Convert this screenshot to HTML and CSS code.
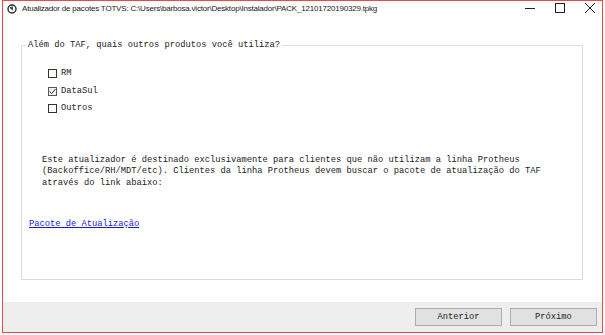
FILE: index.html
```html
<!DOCTYPE html>
<html lang="pt-BR">
<head>
<meta charset="utf-8">
<title>Atualizador de pacotes TOTVS</title>
<link rel="stylesheet" href="styles.css">
</head>
<body>
<div class="window">
  <div class="titlebar">
    <svg class="app-icon" width="10" height="10" viewBox="0 0 10 10">
      <circle cx="5" cy="5" r="4" fill="none" stroke="#2b2b2b" stroke-width="1.4"/>
      <path d="M3.2 3.2 L5.2 5.2 L5.2 2.4" fill="none" stroke="#2b2b2b" stroke-width="1.3"/>
    </svg>
    <span class="title">Atualizador de pacotes TOTVS: C:\Users\barbosa.victor\Desktop\Instalador\PACK_12101720190329.tpkg</span>
    <div class="controls">
      <span class="ctl"><svg width="10" height="10" viewBox="0 0 10 10"><path d="M0 5.5 H10" stroke="#222" stroke-width="1"/></svg></span>
      <span class="ctl"><svg width="10" height="10" viewBox="0 0 10 10"><rect x="0.5" y="0.5" width="9" height="9" fill="none" stroke="#222" stroke-width="1"/></svg></span>
      <span class="ctl"><svg width="10" height="10" viewBox="0 0 10 10"><path d="M0 0 L10 10 M10 0 L0 10" stroke="#222" stroke-width="1"/></svg></span>
    </div>
  </div>
  <div class="content">
    <fieldset class="group">
      <legend class="legend">Além do TAF, quais outros produtos você utiliza?</legend>
      <div class="options">
        <label class="opt"><span class="box"></span>RM</label>
        <label class="opt"><span class="box checked"><svg width="7" height="7" viewBox="0 0 7 7"><path d="M0.5 3.5 L2.6 5.6 L6.5 1" fill="none" stroke="#333" stroke-width="1"/></svg></span>DataSul</label>
        <label class="opt"><span class="box"></span>Outros</label>
      </div>
      <p class="note">Este atualizador é destinado exclusivamente para clientes que não utilizam a linha Protheus<br>(Backoffice/RH/MDT/etc). Clientes da linha Protheus devem buscar o pacote de atualização do TAF<br>através do link abaixo:</p>
      <a class="link" href="#">Pacote de Atualização</a>
    </fieldset>
  </div>
  <div class="footer">
    <button class="btn">Anterior</button>
    <button class="btn">Próximo</button>
  </div>
</div>
</body>
</html>
```

FILE: styles.css
```css
html, body {
  margin: 0;
  padding: 0;
  background: #ffffff;
}

.window {
  margin-left: 2px;
  width: 599px;
  height: 331px;
  border: 1px solid #e84a4a;
  display: flex;
  flex-direction: column;
  background: #ffffff;
}

.titlebar {
  height: 30px;
  display: flex;
  align-items: flex-start;
  flex-shrink: 0;
}

.app-icon {
  margin: 3px 0 0 4px;
  flex-shrink: 0;
}

.title {
  font-family: "Liberation Sans", Arial, sans-serif;
  font-size: 8px;
  letter-spacing: -0.2px;
  color: #1a1a1a;
  margin: 2px 0 0 5px;
  line-height: 12px;
  white-space: nowrap;
  flex: 1;
}

.controls {
  display: flex;
  margin: 2px 7px 0 0;
  gap: 20px;
}

.ctl {
  display: flex;
  width: 10px;
  height: 10px;
}

.content {
  flex: 1;
  display: flex;
  flex-direction: column;
  padding: 8px 19px 22px 18px;
}

.group {
  flex: 1;
  margin: 0;
  padding: 0;
  border: 1px solid #dcdcdc;
  min-width: 0;
  font-family: "Liberation Mono", "DejaVu Sans Mono", monospace;
  font-size: 8.75px;
  color: #222;
}

.legend {
  margin-left: 4px;
  padding: 0 2px;
  line-height: 12px;
  font-size: 8.75px;
}

.options {
  display: flex;
  flex-direction: column;
  margin: 14px 0 0 26px;
}

.opt {
  display: flex;
  align-items: center;
  height: 17.5px;
  line-height: 17px;
}

.box {
  width: 9px;
  height: 9px;
  box-sizing: border-box;
  border: 1px solid #333;
  background: #fff;
  margin-right: 4px;
  display: flex;
  align-items: center;
  justify-content: center;
}

.box.checked {
  border-color: #555;
  background: #f0f0f0;
}

.note {
  margin: 37px 0 0 20px;
  line-height: 11.5px;
}

.link {
  display: inline-block;
  margin: 29px 0 0 7px;
  line-height: 12px;
  color: #1a1ad6;
  text-decoration: underline;
}

.footer {
  height: 30px;
  flex-shrink: 0;
  background: #eeeeee;
  display: flex;
  justify-content: flex-end;
  align-items: flex-start;
  padding-right: 5px;
  gap: 8px;
  box-sizing: border-box;
  padding-top: 6px;
}

.btn {
  width: 87px;
  height: 18px;
  margin: 0;
  padding: 0;
  background: #e1e1e1;
  border: 1px solid #adadad;
  font-family: "Liberation Mono", "DejaVu Sans Mono", monospace;
  font-size: 8.75px;
  color: #222;
}
```
